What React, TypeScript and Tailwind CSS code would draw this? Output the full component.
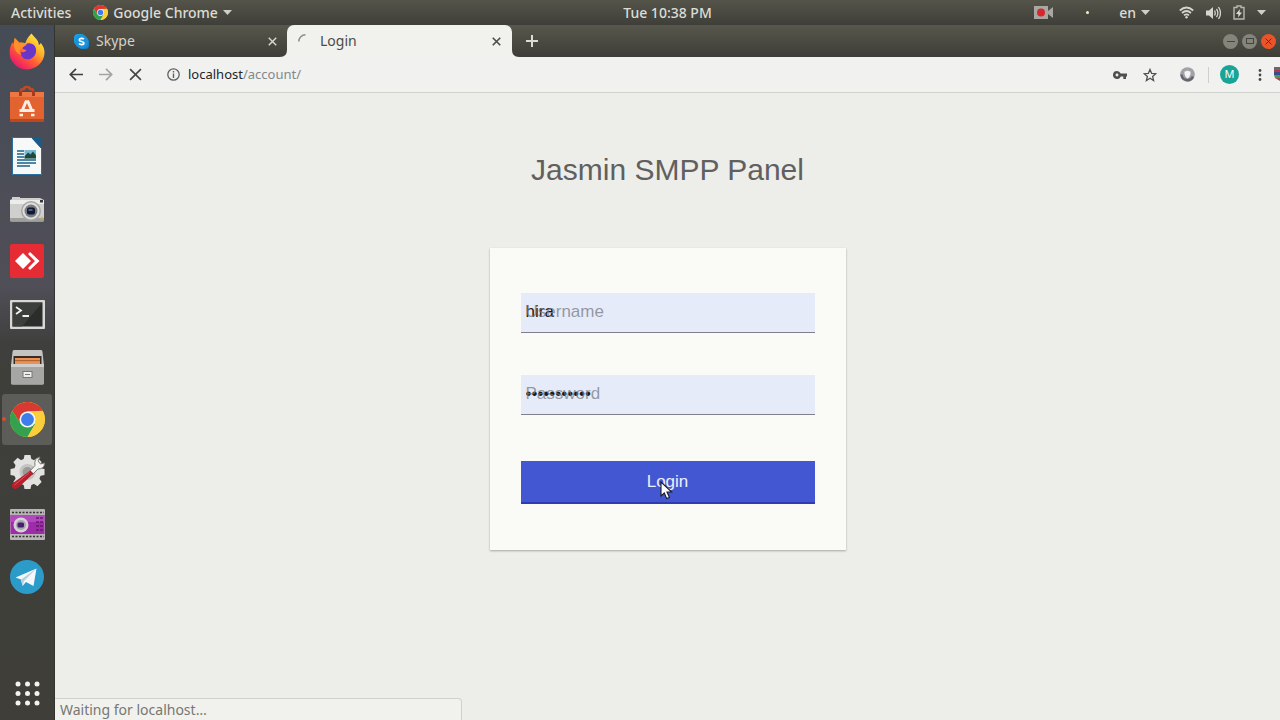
import { useState, type ReactNode } from "react";

function ChromeLogo({ size }: { size: number }) {
  return (
    <svg width={size} height={size} viewBox="0 0 48 48" aria-hidden="true">
      <circle cx="24" cy="24" r="24" fill="#fbcf3b" />
      <path d="M3.2 12A24 24 0 0 1 44.8 12L24 13L14.5 29.5Z" fill="#d83a32" />
      <path d="M3.2 12A24 24 0 0 0 24 48L34.4 30L14.5 29.5Z" fill="#34a14e" />
      <path d="M24 13H45.3A24 24 0 0 1 24 48L34.4 30Z" fill="#fbcf3b" />
      <circle cx="24" cy="24" r="11" fill="#f4f6f8" />
      <circle cx="24" cy="24" r="8.8" fill="#3f7de8" />
    </svg>
  );
}

function Firefox() {
  return (
    <svg width="36" height="37" viewBox="0 0 36 37" aria-hidden="true">
      <defs>
        <linearGradient id="fx" x1="0.85" y1="0.05" x2="0.2" y2="0.9">
          <stop offset="0" stopColor="#fff03c" />
          <stop offset="0.35" stopColor="#ffb22b" />
          <stop offset="0.65" stopColor="#ff5a36" />
          <stop offset="1" stopColor="#ed1a6b" />
        </linearGradient>
      </defs>
      <path
        d="M22.5.5C25 4 27.6 5.4 29 8.6c.5 1.2.8 2.6.9 3.6l2-2.3c2.4 3.2 3.8 6.4 3.6 10.2C35.2 29 27.5 36.5 18 36.5S.5 29 .6 19.5c0-4 1-7.5 2.900-10.300l.8 2L5.800 5l4.600 4.700c2.200-.5 4.200-.2 5.900.5C17.500 6.500 19.500 3.200 22.500.5Z"
        fill="url(#fx)"
      />
      <path d="M18 10.500c5.800-1.500 9.800 3 9.100 8-.6 4.700-4.300 8-8.700 7.800-4.100-.2-7-3.300-6.600-7.300 2.200.5 4.600 0 5.700-2.100-2.100-.3-4.100-1.100-4.600-2.500 1.900-.2 3.700-1.900 5.100-3.900Z" fill="#6a35c9" />
      <path d="M5.800 5l4.600 4.700c2.600 0 5 .2 7.100 2.300-2 .6-3.500 2-4.100 3.200-3.300.4-3.500 4.300-.6 6.800-6-1.500-9.500-6.500-7-17Z" fill="#ff8f27" />
    </svg>
  );
}

function Software() {
  return (
    <svg width="36" height="37" viewBox="0 0 36 37" aria-hidden="true">
      <path d="M12 8V5.500Q12 4 14 4h1q0-2 3-2t3 2h1q2 0 2 1.500V8" fill="none" stroke="#c24a22" strokeWidth="2.500" />
      <path d="M1 7h34v28q0 1.500-1.500 1.500h-31Q1 36.500 1 35Z" fill="#e2632f" />
      <path d="M1 7h34v5H1Z" fill="#ed7643" />
      <path d="M1 34h34v2.500H1Z" fill="#bd4820" />
      <path d="M10 6h3v5h-3ZM23 6h3v5h-3Z" fill="#a93b1a" />
      <path d="M17.500 15.500L13 26M18.500 15.500L23 26M10.500 25.500h15" stroke="#fbeee5" strokeWidth="3" fill="none" />
      <path d="M10.500 30h3.500M22 30h3.500" stroke="#fbeee5" strokeWidth="2.500" />
    </svg>
  );
}

function Writer() {
  return (
    <svg width="30" height="38" viewBox="0 0 30 38" aria-hidden="true">
      <path d="M.5.5h19l10 11v26H.5Z" fill="#f7f8f8" stroke="#2c6f9d" />
      <path d="M19 0h11v12Z" fill="#1a5c88" />
      <path d="M5 14h7M5 17h7M5 20h7M5 23h19M5 26h19M5 29h13" stroke="#1c6188" strokeWidth="1.600" />
      <rect x="12.500" y="13" width="11.500" height="8.500" fill="#79b9d4" />
      <path d="M12.500 21.500v-2l3.500-4 2.500 2 2.500-3 3 4v3Z" fill="#1e4a3d" />
    </svg>
  );
}

function Camera() {
  return (
    <svg width="36" height="26" viewBox="0 0 36 26" aria-hidden="true">
      <path d="M3 3V1h8v1h20l4 2v20q0 1.500-1.500 1.500h-31Q1 25.500 1 24V4Z" fill="#cfcfcd" />
      <path d="M1 4h34v4H1Z" fill="#ededeb" />
      <path d="M1 22h34v2q0 1.500-1.500 1.500h-31Q1 25.500 1 24Z" fill="#9f9f9c" />
      <circle cx="22" cy="15" r="10" fill="#a7a7a6" />
      <circle cx="22" cy="15" r="8.500" fill="#dededd" />
      <circle cx="22" cy="15" r="6.500" fill="#777b82" />
      <rect x="18" y="11.500" width="8" height="7" rx="2" fill="#15192d" />
      <path d="M19.500 13h4v2h-4Z" fill="#4a5c91" />
      <rect x="31" y="4" width="3" height="2.500" fill="#383838" />
      <circle cx="33" cy="22" r="1.200" fill="#d7b04f" />
    </svg>
  );
}

function AnyDesk() {
  return (
    <svg width="34" height="34" viewBox="0 0 34 34" aria-hidden="true">
      <rect width="34" height="34" rx="2" fill="#e52c35" />
      <path d="M5 17l8-8 8 8-8 8Z" fill="#fff" />
      <path d="M18 10l2-2 9.500 9-9.500 9-2-2 7-7Z" fill="#fff" />
    </svg>
  );
}

function Terminal() {
  return (
    <svg width="35" height="29" viewBox="0 0 35 29" aria-hidden="true">
      <rect width="35" height="29" rx="1" fill="#d7d8d5" />
      <rect x="2.500" y="2.500" width="30" height="24" fill="#2b2d2a" />
      <path d="M2.500 2.500h30L12 26.500H2.500Z" fill="#3c3e3b" />
      <path d="M6 7l5 3.500L6 14M12.500 16h6.500" stroke="#f2f2f0" strokeWidth="1.800" fill="none" />
    </svg>
  );
}

function Files() {
  return (
    <svg width="33" height="36" viewBox="0 0 33 36" aria-hidden="true">
      <path d="M3 1h27q1.500 0 1.500 2L33 17v17q0 1.500-1.500 1.500h-30Q0 35.500 0 34V17L1.500 3Q1.500 1 3 1Z" fill="#c4c4c2" />
      <path d="M2.500 7h28v9h-28Z" fill="#3b2b20" />
      <path d="M4 9h25v7H4Z" fill="#e8935a" />
      <path d="M4 11h25v1.200H4Z" fill="#b5622f" />
      <path d="M0 15h33v18.500q0 2-2 2H2q-2 0-2-2Z" fill="#a6a6a4" />
      <path d="M0 15h33v3H0Z" fill="#cececc" />
      <rect x="12" y="22.500" width="9" height="6" fill="#eeeeec" stroke="#777" />
      <path d="M14 25.500h5" stroke="#777" />
    </svg>
  );
}

const teeth = [0, 45, 90, 135, 180, 225, 270, 315];

function Settings() {
  return (
    <svg width="35" height="36" viewBox="0 0 35 36" aria-hidden="true">
      {teeth.map((angle) => (
        <path key={angle} d="M13.500 6L14.500 1h6L21.500 6Z" fill="#e2e2e0" transform={`rotate(${angle} 17.5 18)`} />
      ))}
      <circle cx="17.500" cy="18" r="13.500" fill="#e2e2e0" />
      <circle cx="17.500" cy="18" r="8" fill="#c3c3c1" />
      <circle cx="17.500" cy="18" r="5" fill="#9a9b99" />
      <path d="M19 18l6-6.500q-1.500-7 5-8.500l-2 4 2.500 3 4-1q0 6-6.500 6L22 21Z" fill="#f3f3f1" stroke="#7c7c7a" strokeWidth="1" />
      <path d="M20.500 16.500l3 3L8.500 33.500q-3 2.500-5.500.5t0-5Z" fill="#b71f2c" />
      <path d="M19.500 18.500L4.500 31" stroke="#dc5360" strokeWidth="1" />
    </svg>
  );
}

function Kazam() {
  return (
    <svg width="35" height="31" viewBox="0 0 35 31" aria-hidden="true">
      <rect width="35" height="31" rx="1" fill="#b8b5b7" />
      <path d="M2 3.500h32M2 27.500h32" stroke="#34332f" strokeWidth="1.500" strokeDasharray="2 1.500" />
      <rect x=".5" y="6" width="34" height="19" fill="#9e2baa" />
      <path d="M.5 6h34v7H.5Z" fill="#b449bf" />
      <path d="M26 9h7M26 13h7M26 17h7M26 21h7" stroke="#611c6b" strokeWidth="1.500" strokeDasharray="3 1" />
      <circle cx="11" cy="16" r="7.500" fill="#d5d3d5" />
      <circle cx="11" cy="16" r="5" fill="#a8a5b0" />
      <rect x="7.500" y="13.500" width="6.500" height="5" rx="1.500" fill="#45206f" />
    </svg>
  );
}

function Telegram() {
  return (
    <svg width="34" height="34" viewBox="0 0 34 34" aria-hidden="true">
      <circle cx="17" cy="17" r="17" fill="#2b9bc9" />
      <path d="M5.500 17.500L26.500 8.500 23.500 26 16 22l-3.500 4-1.500-6.500Z" fill="#f4f8fa" />
      <path d="M11 19.500L26.500 8.500 14 21l-1.500 5Z" fill="#b9cfdb" />
    </svg>
  );
}

function AppsGrid() {
  const stops = [3, 12.5, 22];
  return (
    <svg width="25" height="25" viewBox="0 0 25 25" fill="#f3f3f1" aria-hidden="true">
      {stops.map((y) => stops.map((x) => <circle key={`${x}-${y}`} cx={x} cy={y} r="2.5" />))}
    </svg>
  );
}

function Caret() {
  return (
    <svg width="9" height="5" viewBox="0 0 9 5" aria-hidden="true">
      <path d="M0 0h9L4.500 5Z" fill="#cfcfc8" />
    </svg>
  );
}

function Cross({ size, color, weight }: { size: number; color: string; weight: number }) {
  return (
    <svg width={size} height={size} viewBox="0 0 12 12" aria-hidden="true">
      <path d="M1 1l10 10M11 1L1 11" stroke={color} strokeWidth={weight} />
    </svg>
  );
}

const dock: { name: string; icon: ReactNode; running?: boolean }[] = [
  { name: "Firefox", icon: <Firefox /> },
  { name: "Ubuntu Software", icon: <Software /> },
  { name: "LibreOffice Writer", icon: <Writer /> },
  { name: "Camera", icon: <Camera /> },
  { name: "AnyDesk", icon: <AnyDesk /> },
  { name: "Terminal", icon: <Terminal /> },
  { name: "Files", icon: <Files /> },
  { name: "Chrome", icon: <ChromeLogo size={35} />, running: true },
  { name: "Settings", icon: <Settings /> },
  { name: "Screen recorder", icon: <Kazam /> },
  { name: "Telegram", icon: <Telegram /> },
];

function TopBar() {
  return (
    <header className="grid h-[25px] shrink-0 grid-cols-[55px_1fr_auto_1fr] items-center overflow-hidden bg-linear-to-b from-[#54544a] to-[#3f3f39] text-sm font-medium text-[#dcdcd5]">
      <div className="col-span-2 flex items-center gap-[22px] pl-[11px]">
        <button type="button">Activities</button>
        <button type="button" className="flex items-center gap-[5px]">
          <ChromeLogo size={15} />
          Google Chrome
          <Caret />
        </button>
      </div>
      <time>Tue 10:38 PM</time>
      <div className="flex items-center justify-end pr-[14px]">
        <svg className="mr-8" width="20" height="14" viewBox="0 0 20 14" aria-hidden="true">
          <path d="M0 0h14v13H0Z" fill="#a8a8a2" />
          <path d="M14 5l5-4v11l-5-4Z" fill="#a8a8a2" />
          <circle cx="7" cy="6.500" r="4" fill="#d6272d" />
        </svg>
        <span className="mr-[30px] size-[3px] rounded-full bg-[#f0f0c8]" />
        <button type="button" className="mr-[29px] flex items-center gap-[5px]">
          en
          <Caret />
        </button>
        <svg className="mr-3" width="15" height="13" viewBox="0 0 15 13" fill="none" stroke="#d6d6cf" strokeWidth="1.700" aria-hidden="true">
          <path d="M.8 4.500q6.700-6 13.400 0" />
          <path d="M3 7q4.500-4 9 0" />
          <path d="M5 9.300q2.500-2 5 0" />
          <circle cx="7.500" cy="11.300" r="1.200" fill="#d6d6cf" stroke="none" />
        </svg>
        <svg className="mr-3" width="15" height="14" viewBox="0 0 15 14" aria-hidden="true">
          <path d="M0 4.500h3L7 1v12L3 9.500H0Z" fill="#d6d6cf" />
          <path d="M8.500 4.500q1.500 2.500 0 5M10.500 2.800q2.700 4.200 0 8.400M12.500 1q4 6 0 12" fill="none" stroke="#d6d6cf" strokeWidth="1.300" />
        </svg>
        <svg className="mr-3" width="12" height="15" viewBox="0 0 12 15" aria-hidden="true">
          <path d="M1 2.500h3V1h4v1.500h3v11.500H1Z" fill="none" stroke="#b8b8b1" strokeWidth="1.400" />
          <path d="M7 4L3 9h2.500L5 12.500l4-5H6.500Z" fill="#deded8" />
        </svg>
        <Caret />
      </div>
    </header>
  );
}

function Dock() {
  return (
    <nav
      aria-label="Dock"
      className="flex w-[55px] shrink-0 flex-col justify-between border-r border-[#33332f] bg-linear-to-b from-[#474c56] via-[#3e3f3b] to-[#3f3e39] pb-[14px]"
    >
      <ul className="flex h-[578px] flex-col bg-linear-to-b from-[#454c56] from-0% via-[#504e57] via-45% to-transparent to-55%">
        {dock.map((app) => (
          <li key={app.name} className="flex min-h-0 flex-1 items-center px-[2px]">
            <button
              type="button"
              aria-label={app.name}
              className={
                app.running
                  ? "relative flex h-[51px] w-full items-center justify-center rounded-[3px] bg-[#5c5d59]"
                  : "flex w-full items-center justify-center"
              }
            >
              {app.running && <span className="absolute left-0 size-1 rounded-full bg-[#e0492b]" />}
              {app.icon}
            </button>
          </li>
        ))}
      </ul>
      <button type="button" aria-label="Show applications" className="flex justify-center">
        <AppsGrid />
      </button>
    </nav>
  );
}

function TabCurve({ flip }: { flip?: boolean }) {
  return (
    <svg width="7" height="7" viewBox="0 0 7 7" aria-hidden="true">
      <path d={flip ? "M0 0Q0 7 7 7H0Z" : "M7 0Q7 7 0 7H7Z"} fill="#f1f1ed" />
    </svg>
  );
}

function TabStrip() {
  return (
    <div className="flex h-8 shrink-0 items-stretch bg-linear-to-b from-[#57574c] to-[#3e3e38] text-sm">
      <div className="flex w-[225px] items-center pl-[19px] text-[#d2d2cb]">
        <svg width="15" height="15" viewBox="0 0 15 15" aria-hidden="true">
          <rect width="11" height="11" rx="4" fill="#1c9fe0" />
          <rect x="4" y="4" width="11" height="11" rx="4" fill="#1583cd" />
          <circle cx="7.500" cy="7.500" r="6.800" fill="#1a93dc" />
          <path d="M9.800 5.300C8.800 4 5.300 4 5.300 5.900c0 2.100 4.600 1.100 4.600 3.200 0 1.900-3.700 1.900-4.800.4" fill="none" stroke="#fff" strokeWidth="1.700" />
        </svg>
        <span className="ml-[7px] flex-1">Skype</span>
        <button type="button" aria-label="Close Skype tab" className="mr-[3px]">
          <Cross size={9} color="#d8d8d2" weight={1.9} />
        </button>
      </div>
      <div className="flex items-end">
        <TabCurve />
      </div>
      <div className="flex w-[225px] items-center rounded-t-[7px] bg-[#f1f1ed] px-[11px] text-[#4c4c48]">
        <svg width="15" height="15" viewBox="0 0 15 15" aria-hidden="true">
          <path d="M.8 7.500A6.700 6.700 0 0 1 7.500 .8" fill="none" stroke="#8d8d89" strokeWidth="1.500" />
        </svg>
        <span className="ml-[7px] flex-1">Login</span>
        <button type="button" aria-label="Close Login tab">
          <Cross size={9} color="#4c4c48" weight={2.2} />
        </button>
      </div>
      <div className="flex items-end">
        <TabCurve flip />
      </div>
      <button type="button" aria-label="New tab" className="ml-[7px]">
        <svg width="12" height="12" viewBox="0 0 12 12" aria-hidden="true">
          <path d="M6 0v12M0 6h12" stroke="#dcdcd5" strokeWidth="2" />
        </svg>
      </button>
      <div className="flex flex-1 items-center justify-end gap-1">
        <button type="button" aria-label="Minimize" className="flex size-[15px] items-center justify-center rounded-full bg-[#85847b]">
          <span className="h-px w-2 bg-[#44443d]" />
        </button>
        <button type="button" aria-label="Maximize" className="flex size-[15px] items-center justify-center rounded-full bg-[#85847b]">
          <span className="h-[6px] w-2 border border-[#44443d]" />
        </button>
        <button type="button" aria-label="Close window" className="mr-1 flex size-[15px] items-center justify-center rounded-full bg-[#e9542a]">
          <Cross size={7} color="#6b2413" weight={1.6} />
        </button>
      </div>
    </div>
  );
}

function Toolbar() {
  return (
    <div className="flex h-9 shrink-0 items-center overflow-hidden border-b border-[#d0d1cd] bg-[#f1f2f0] pl-[14px] text-[13px]">
      <button type="button" aria-label="Back">
        <svg width="14" height="13" viewBox="0 0 14 13" fill="none" stroke="#3f3f3d" strokeWidth="1.700" aria-hidden="true">
          <path d="M14 6.500H1.500M7 .8L1.300 6.500 7 12.200" />
        </svg>
      </button>
      <button type="button" aria-label="Forward" className="ml-4">
        <svg width="14" height="13" viewBox="0 0 14 13" fill="none" stroke="#a4a4a2" strokeWidth="1.700" aria-hidden="true">
          <path d="M0 6.500h12.500M7 .8l5.700 5.700L7 12.200" />
        </svg>
      </button>
      <button type="button" aria-label="Stop loading" className="ml-4">
        <Cross size={13} color="#474745" weight={1.5} />
      </button>
      <svg className="ml-[25px]" width="13" height="13" viewBox="0 0 13 13" aria-hidden="true">
        <circle cx="6.500" cy="6.500" r="5.700" fill="none" stroke="#5f6061" strokeWidth="1.300" />
        <path d="M6.500 5.500V10M6.500 3v1.500" stroke="#5f6061" strokeWidth="1.400" />
      </svg>
      <p className="ml-2 flex-1 text-[#82888a]">
        <span className="text-[#232527]">localhost</span>/account/
      </p>
      <button type="button" aria-label="Saved passwords">
        <svg width="14" height="8" viewBox="0 0 14 8" aria-hidden="true">
          <path fillRule="evenodd" d="M4 0a4 4 0 0 1 3.700 2.600H14v2.800h-1V8h-2.700V5.400H7.700A4 4 0 1 1 4 0Zm0 2.600a1.400 1.400 0 1 0 0 2.800 1.400 1.400 0 0 0 0-2.800Z" fill="#50504e" />
        </svg>
      </button>
      <button type="button" aria-label="Bookmark this page" className="ml-4">
        <svg width="14" height="14" viewBox="0 0 14 14" aria-hidden="true">
          <path d="M7 1.500l1.600 3.800 4.200.4-3.200 2.700 1 4.100L7 10.300l-3.600 2.200 1-4.100L1.200 5.700l4.200-.4Z" fill="none" stroke="#50504e" strokeWidth="1.300" />
        </svg>
      </button>
      <button type="button" aria-label="Shield extension" className="ml-[23px]">
        <svg width="15" height="15" viewBox="0 0 15 15" aria-hidden="true">
          <circle cx="7.500" cy="7.500" r="7.300" fill="#a2a1a8" />
          <path d="M1.500 7.500A6 6 0 0 0 13 9.500" fill="none" stroke="#66656d" strokeWidth="2.400" />
          <path d="M4.500 4.500q1.500 0 3-1 1.500 1 3 1 .5 4.500-3 7Q4 9 4.500 4.500Z" fill="#f4f4f4" />
        </svg>
      </button>
      <span className="ml-[13px] h-4 w-px bg-[#cfcfcd]" />
      <button type="button" aria-label="Profile" className="ml-[11px] flex size-[19px] items-center justify-center rounded-full bg-[#18a497] text-[11px] text-white">
        M
      </button>
      <button type="button" aria-label="Menu" className="ml-[19px]">
        <svg width="4" height="12" viewBox="0 0 4 12" fill="#484846" aria-hidden="true">
          <circle cx="2" cy="1.500" r="1.400" />
          <circle cx="2" cy="6" r="1.400" />
          <circle cx="2" cy="10.500" r="1.400" />
        </svg>
      </button>
      <svg className="ml-3" width="6" height="15" viewBox="0 0 6 15" aria-hidden="true">
        <path d="M0 0h6v3H0Z" fill="#68686e" />
        <path d="M0 3h6v2H0Z" fill="#a63f4b" />
        <path d="M0 5h6v3H0Z" fill="#394e91" />
        <path d="M0 8h6v3H1Z" fill="#4b9962" />
        <path d="M1 11h5v3Z" fill="#a34650" />
      </svg>
    </div>
  );
}

type FieldProps = {
  id: string;
  label: string;
  type: "text" | "password";
  value: string;
  onChange: (value: string) => void;
};

function Field({ id, label, type, value, onChange }: FieldProps) {
  return (
    <div className="relative">
      <input
        id={id}
        type={type}
        value={value}
        onChange={(event) => onChange(event.target.value)}
        className="block h-10 w-full border-b border-[#7f8089] bg-[#e6ebfa] px-[5px] pb-px text-[17px] text-[#17181c] outline-none"
      />
      <label htmlFor={id} className="pointer-events-none absolute inset-y-0 left-[5px] flex items-center pb-[2px] text-[17px] text-[#777b85]/75">
        {label}
      </label>
    </div>
  );
}

function LoginPage() {
  const [username, setUsername] = useState("hira");
  const [password, setPassword] = useState("jasmin-2019");

  return (
    <main className="flex flex-1 flex-col items-center pt-[54px] font-['Liberation_Sans',sans-serif]">
      <h1 className="text-[30px] leading-[46px] text-[#606060]">Jasmin SMPP Panel</h1>
      <form
        onSubmit={(event) => event.preventDefault()}
        className="mt-[55px] flex w-full max-w-[356px] flex-col bg-[#fafbf7] px-[31px] pt-[45px] pb-[46px] shadow-[0_1px_2px_rgba(0,0,0,0.3)]"
      >
        <div className="flex flex-col gap-[42px]">
          <Field id="username" label="Username" type="text" value={username} onChange={setUsername} />
          <Field id="password" label="Password" type="password" value={password} onChange={setPassword} />
        </div>
        <button
          type="submit"
          className="relative mt-[46px] h-[43px] border-b-2 border-[#2f3bae] bg-[#4457d2] text-[17px] text-[#eef0fb]"
        >
          Login
          <svg className="absolute top-[20px] left-[139px]" width="13" height="19" viewBox="0 0 13 19" aria-hidden="true">
            <path d="M1 1v14l3.300-3 2.400 5.600 2.700-1.200L7 11h4.700Z" fill="#fff" stroke="#1b1b24" strokeWidth="1.100" />
          </svg>
        </button>
      </form>
    </main>
  );
}

export default function App() {
  return (
    <div className="flex h-screen flex-col overflow-hidden bg-[#edeee9] font-['Noto_Sans','Open_Sans',sans-serif]">
      <TopBar />
      <div className="flex min-h-0 flex-1">
        <Dock />
        <section className="flex min-w-0 flex-1 flex-col">
          <TabStrip />
          <Toolbar />
          <LoginPage />
          <p role="status" className="h-[22px] w-[407px] rounded-tr-[4px] border-t border-r border-[#d0d1cc] bg-[#f1f2ee] pl-[5px] text-sm leading-[21px] text-[#777772]">
            Waiting for localhost…
          </p>
        </section>
      </div>
    </div>
  );
}
